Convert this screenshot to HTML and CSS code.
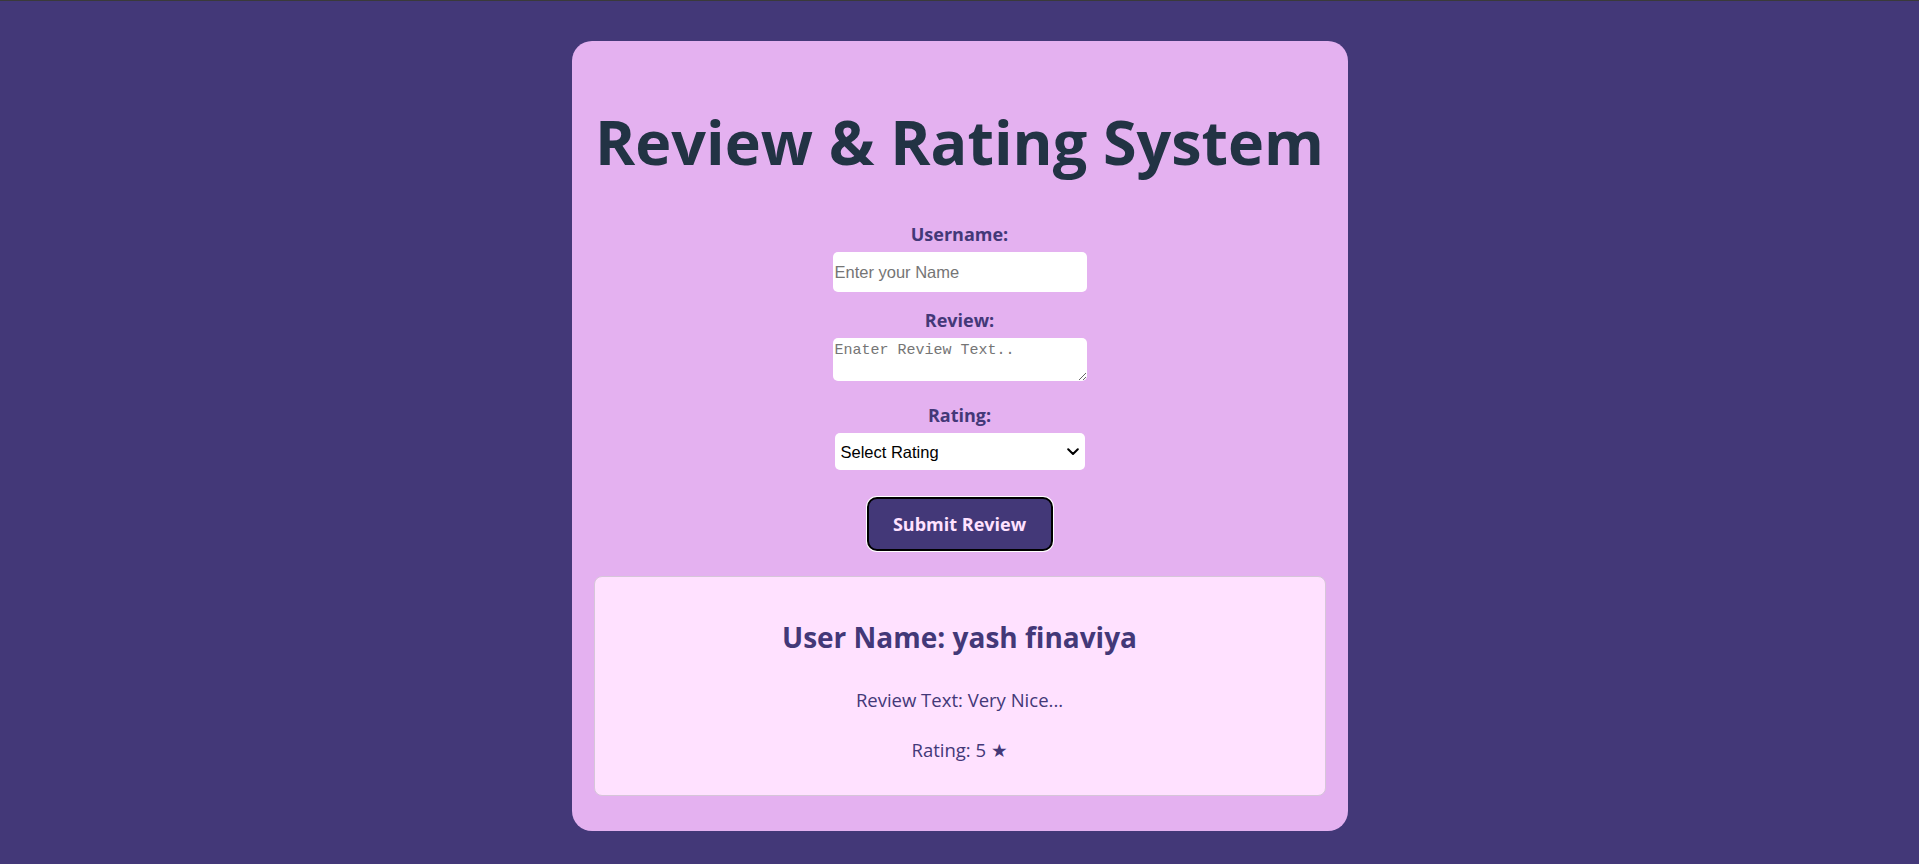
FILE: index.html
```html
<!DOCTYPE html>
<html lang="en">
<head>
<meta charset="utf-8">
<title>Review &amp; Rating System</title>
<link rel="stylesheet" href="styles.css">
</head>
<body>
<div class="card">
  <h1 class="title">Review &amp; Rating System</h1>
  <form class="form">
    <label class="label" for="username">Username:</label>
    <input class="field" id="username" type="text" placeholder="Enter your Name">
    <label class="label label-review" for="review">Review:</label>
    <textarea class="area" id="review" placeholder="Enater Review Text.."></textarea>
    <label class="label label-rating" for="rating">Rating:</label>
    <span class="picker-wrap">
      <select class="picker" id="rating">
        <option>Select Rating</option>
        <option>1 ★</option>
        <option>2 ★</option>
        <option>3 ★</option>
        <option>4 ★</option>
        <option>5 ★</option>
      </select>
      <svg class="chevron" width="12" height="8" viewBox="0 0 12 8" aria-hidden="true"><path d="M1.2 1.2 L6 6 L10.8 1.2" fill="none" stroke="#000" stroke-width="2" stroke-linecap="round" stroke-linejoin="round"/></svg>
    </span>
    <button class="submit" type="button">Submit Review</button>
  </form>
  <div class="review">
    <h2 class="review-name">User Name: yash finaviya</h2>
    <p class="review-text">Review Text: Very Nice...</p>
    <p class="review-rating">Rating: 5 ★</p>
  </div>
</div>
</body>
</html>
```
FILE: styles.css
```css
html, body {
  margin: 0;
  padding: 0;
}
body {
  background: #433878;
  border-top: 1px solid #3a3a3a;
  min-height: 863px;
  font-family: "Open Sans", "DejaVu Sans", sans-serif;
}
.card {
  width: 776px;
  box-sizing: border-box;
  margin: 40px auto 0;
  background: #E4B1F0;
  border-radius: 20px;
  padding: 64px 22px 35px;
  text-align: center;
}
.title {
  margin: 0;
  font-size: 61px;
  line-height: 1.2;
  font-weight: 700;
  color: #223344;
  white-space: nowrap;
}
.form {
  display: flex;
  flex-direction: column;
  align-items: center;
  margin-top: 44px;
}
.label {
  font-size: 18px;
  line-height: 25px;
  font-weight: 700;
  color: #433878;
}
.label-review { margin-top: 16px; }
.label-rating { margin-top: 22px; }
.field {
  margin-top: 5px;
  width: 254px;
  height: 40px;
  box-sizing: border-box;
  border: none;
  border-radius: 5px;
  padding: 0 2px;
  background: #fff;
  font-family: "Liberation Sans", Arial, sans-serif;
  font-size: 16.5px;
  color: #000;
  outline: none;
}
.field::placeholder { color: #757575; }
.area {
  margin-top: 5px;
  width: 254px;
  height: 43px;
  box-sizing: border-box;
  border: none;
  border-radius: 5px;
  padding: 4px 2px 2px;
  background: #fff;
  font-family: "Liberation Mono", "DejaVu Sans Mono", monospace;
  font-size: 15px;
  line-height: 17px;
  outline: none;
}
.area::placeholder { color: #757575; }
.picker-wrap {
  position: relative;
  display: block;
  margin-top: 5px;
  width: 250px;
  height: 37px;
}
.picker {
  appearance: none;
  -webkit-appearance: none;
  display: block;
  width: 100%;
  height: 100%;
  box-sizing: border-box;
  border: none;
  border-radius: 5px;
  padding: 0 24px 0 6px;
  background: #fff;
  font-family: "Liberation Sans", Arial, sans-serif;
  font-size: 16.5px;
  color: #000;
  outline: none;
}
.chevron {
  position: absolute;
  right: 6px;
  top: 15px;
  pointer-events: none;
}
.submit {
  margin-top: 27px;
  width: 186px;
  height: 54px;
  box-sizing: border-box;
  background: #433878;
  color: #FFE1FF;
  border: 2px solid #000;
  border-radius: 10px;
  box-shadow: 0 0 0 1px #fff;
  font-family: "Open Sans", sans-serif;
  font-size: 18px;
  font-weight: 700;
  cursor: pointer;
}
.review {
  margin-top: 25px;
  background: #FFE1FF;
  border: 1px solid #d6c6d9;
  border-radius: 8px;
  height: 220px;
  box-sizing: border-box;
  padding-top: 42px;
  color: #433878;
}
.review-name {
  margin: 0;
  font-size: 28px;
  line-height: 36px;
  font-weight: 700;
}
.review-text {
  margin: 31px 0 0;
  font-size: 18.5px;
  line-height: 27px;
}
.review-rating {
  margin: 23px 0 0;
  font-size: 18.5px;
  line-height: 27px;
}
```
